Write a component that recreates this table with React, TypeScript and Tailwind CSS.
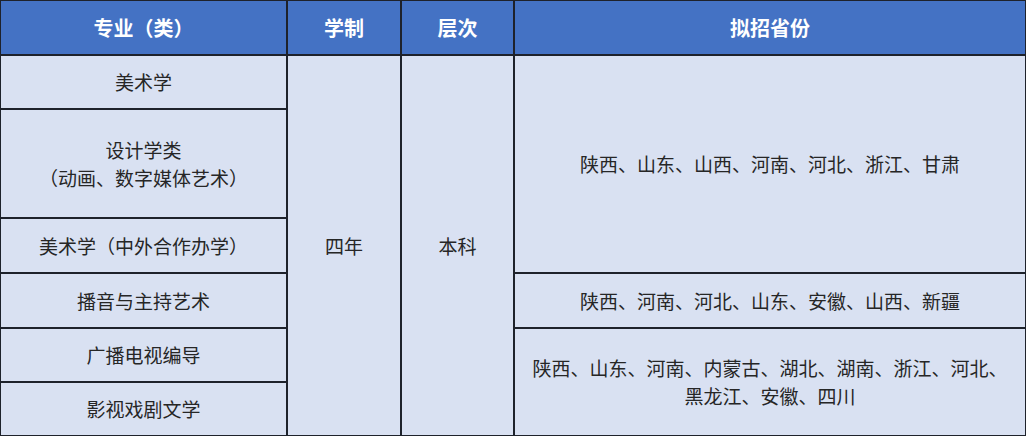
const font = { fontFamily: '"Noto Sans CJK SC", "Noto Sans", sans-serif' };

function Head({ children }: { children: React.ReactNode }) {
  return (
    <div className="bg-[#4472c4] text-white font-bold text-[20px] flex items-center justify-center">
      {children}
    </div>
  );
}

function Cell({ children, className = '' }: { children: React.ReactNode; className?: string }) {
  return (
    <div
      className={`bg-[#d9e1f2] text-[#262626] text-[19px] leading-[28px] flex flex-col items-center justify-center text-center ${className}`}
    >
      {children}
    </div>
  );
}

export default function App() {
  return (
    <div className="w-[1026px] h-[437px] bg-white" style={font}>
      <div className="grid grid-cols-[285px_112px_111px_1fr] grid-rows-[53px_52px_107px_53px_53px_52px_52px] gap-[2px] p-[1px] bg-[#1e222b] w-[1026px]">
        <Head>专业（类）</Head>
        <Head>学制</Head>
        <Head>层次</Head>
        <Head>拟招省份</Head>

        <Cell className="col-start-1 row-start-2">美术学</Cell>
        <Cell className="col-start-1 row-start-3">
          <span>设计学类</span>
          <span>（动画、数字媒体艺术）</span>
        </Cell>
        <Cell className="col-start-1 row-start-4">美术学（中外合作办学）</Cell>
        <Cell className="col-start-1 row-start-5">播音与主持艺术</Cell>
        <Cell className="col-start-1 row-start-6">广播电视编导</Cell>
        <Cell className="col-start-1 row-start-7">影视戏剧文学</Cell>

        <Cell className="col-start-2 row-start-2 row-span-6">四年</Cell>
        <Cell className="col-start-3 row-start-2 row-span-6">本科</Cell>

        <Cell className="col-start-4 row-start-2 row-span-3">陕西、山东、山西、河南、河北、浙江、甘肃</Cell>
        <Cell className="col-start-4 row-start-5">陕西、河南、河北、山东、安徽、山西、新疆</Cell>
        <Cell className="col-start-4 row-start-6 row-span-2 whitespace-nowrap">
          <span>陕西、山东、河南、内蒙古、湖北、湖南、浙江、河北、</span>
          <span>黑龙江、安徽、四川</span>
        </Cell>
      </div>
    </div>
  );
}
